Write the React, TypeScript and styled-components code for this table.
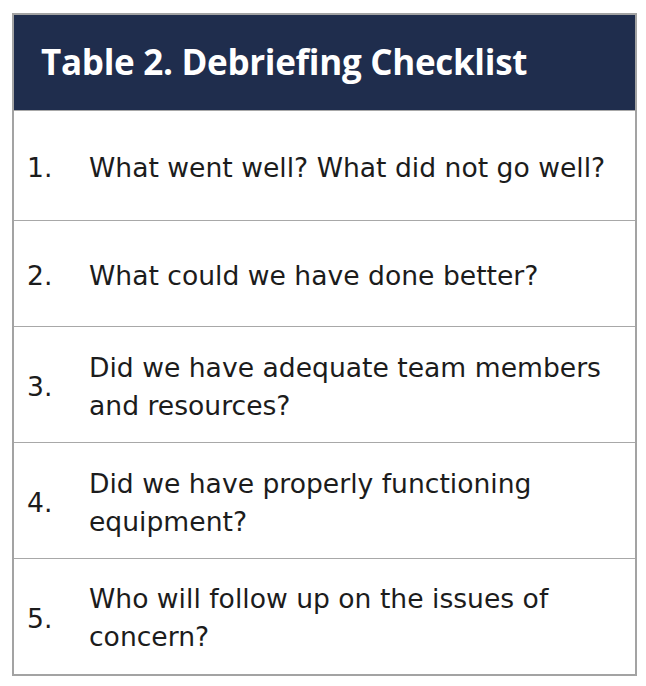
import styled, { createGlobalStyle } from 'styled-components';

const ITEMS = [
  { text: 'What went well? What did not go well?', height: 110 },
  { text: 'What could we have done better?', height: 106 },
  { text: 'Did we have adequate team members and resources?', height: 116 },
  { text: 'Did we have properly functioning equipment?', height: 116 },
  { text: 'Who will follow up on the issues of concern?', height: 116 },
];

const GlobalStyle = createGlobalStyle`
  html, body {
    margin: 0;
    padding: 0;
    background: #fff;
  }
`;

const Page = styled.div`
  padding: 13px 10px 0 12px;
  font-family: 'DejaVu Sans', 'Open Sans', 'Liberation Sans', sans-serif;
`;

const Table = styled.table`
  width: 625px;
  border-collapse: collapse;
  border: 2px solid #a3a3a3;
`;

const HeaderCell = styled.th`
  height: 93px;
  padding: 0 0 2px 27px;
  background: #1f2d4d;
  color: #fff;
  font-family: 'Open Sans', 'Liberation Sans', sans-serif;
  font-size: 35px;
  line-height: 40px;
  font-weight: 700;
  text-align: left;
  letter-spacing: -0.3px;
`;

const Row = styled.tr<{ $height: number }>`
  height: ${p => p.$height}px;
  border-top: 1.5px solid #a8a8a8;
`;

const NumCell = styled.td`
  width: 48px;
  padding: 4px 0 0 13px;
  font-size: 26.6px;
  color: #1c1c1c;
  vertical-align: middle;
`;

const TextCell = styled.td`
  padding: 4px 14px 0 14px;
  font-size: 26.6px;
  line-height: 38px;
  color: #1c1c1c;
  vertical-align: middle;
`;

export default function App() {
  return (
    <Page>
      <GlobalStyle />
      <Table>
        <thead>
          <tr>
            <HeaderCell colSpan={2}>Table 2. Debriefing Checklist</HeaderCell>
          </tr>
        </thead>
        <tbody>
          {ITEMS.map((item, i) => (
            <Row key={item.text} $height={item.height}>
              <NumCell>{i + 1}.</NumCell>
              <TextCell>{item.text}</TextCell>
            </Row>
          ))}
        </tbody>
      </Table>
    </Page>
  );
}
